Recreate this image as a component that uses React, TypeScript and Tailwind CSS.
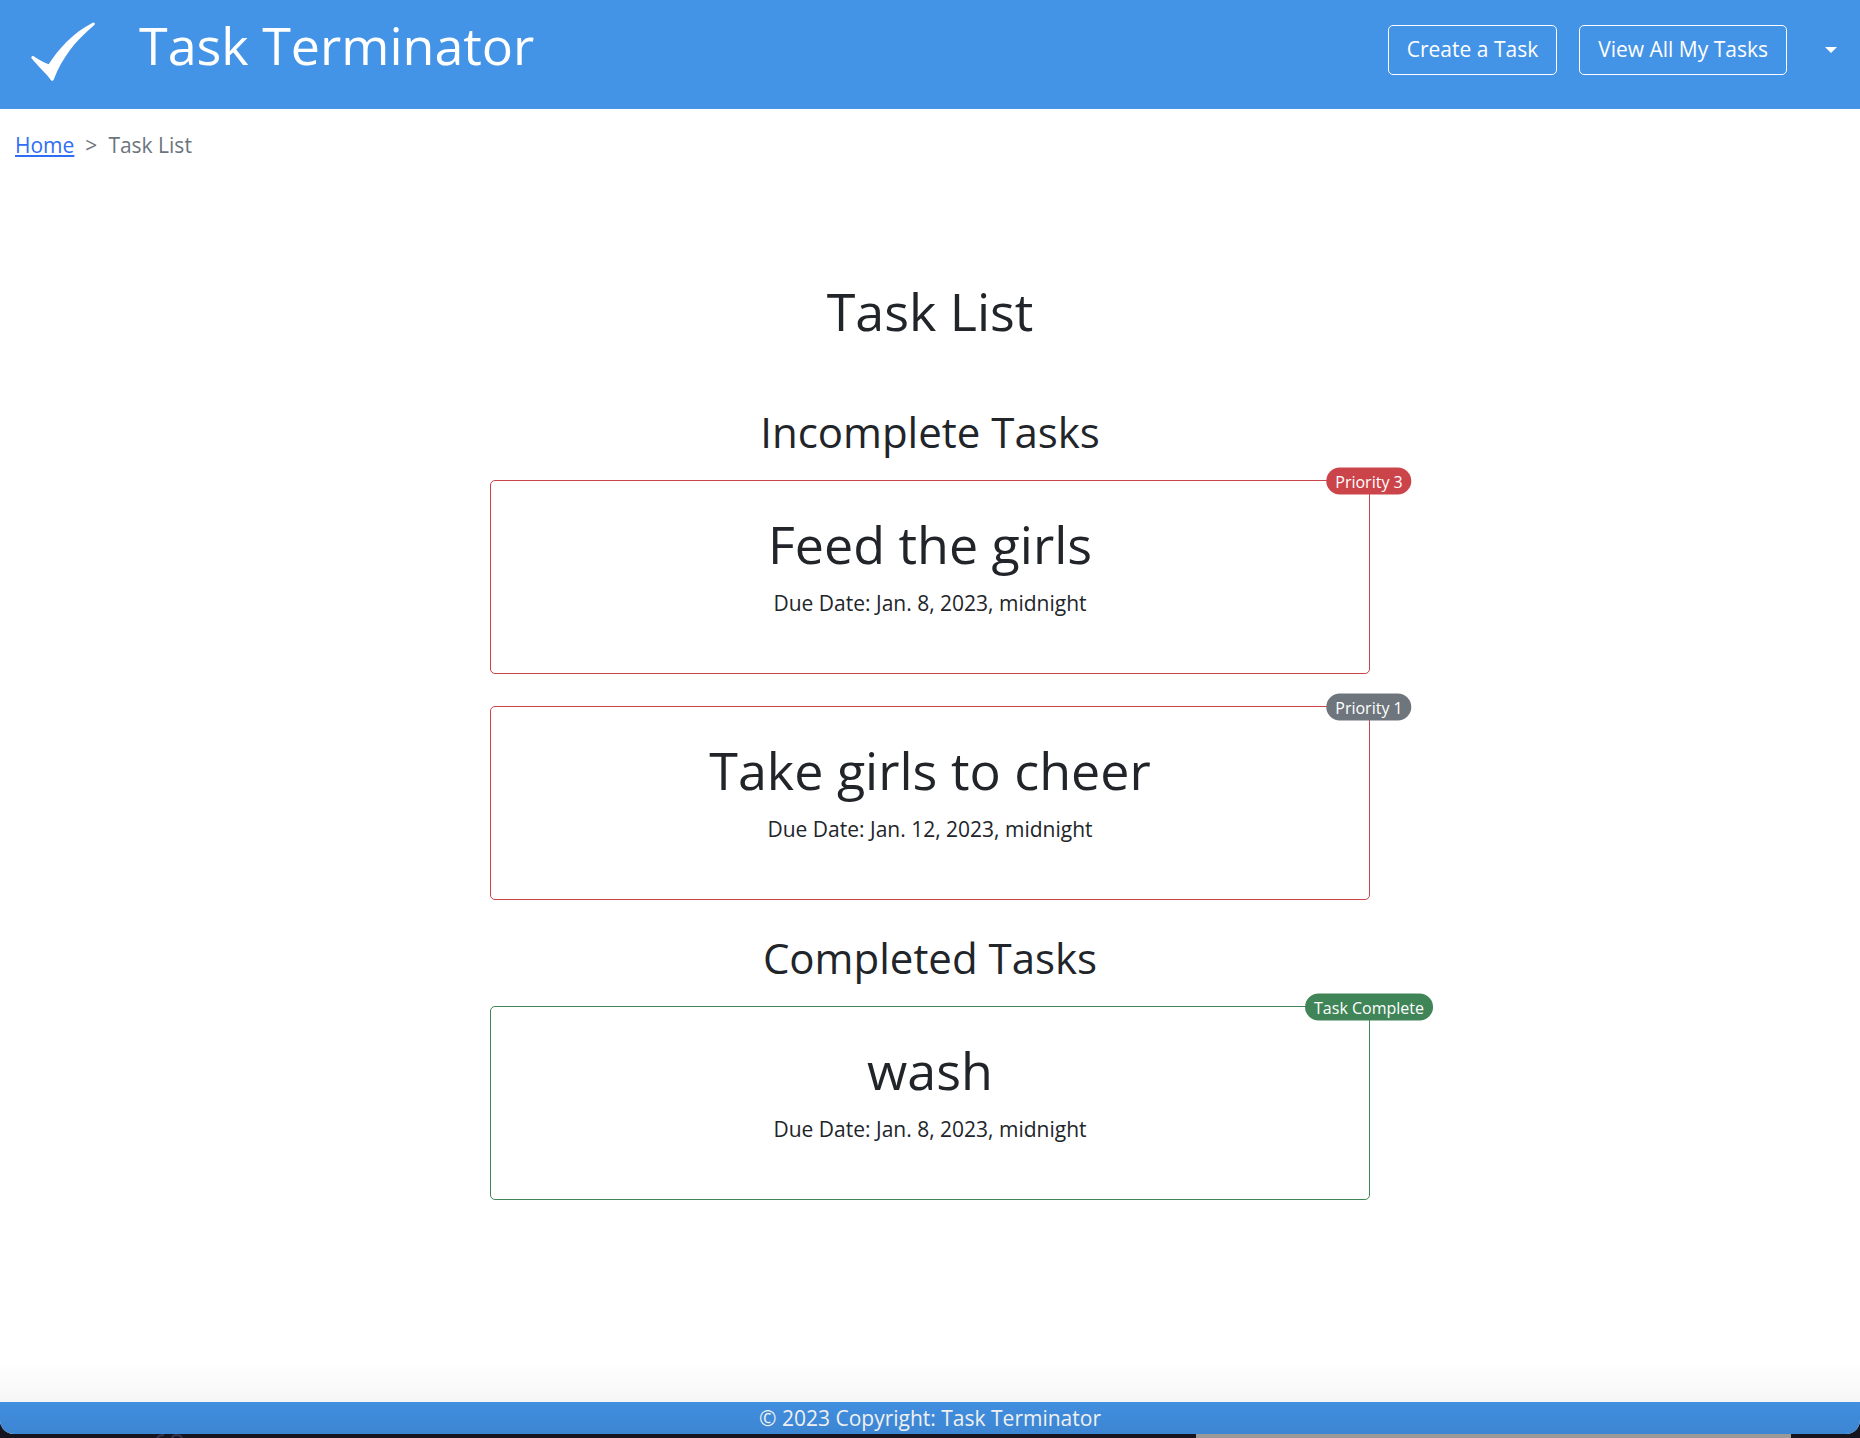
type Task = {
  title: string;
  due: string;
  badge: string;
  badgeClass: string;
  cardClass: string;
};

const incomplete: Task[] = [
  {
    title: "Feed the girls",
    due: "Jan. 8, 2023, midnight",
    badge: "Priority 3",
    badgeClass: "bg-[#cb444a]",
    cardClass: "border-[#cb444a]",
  },
  {
    title: "Take girls to cheer",
    due: "Jan. 12, 2023, midnight",
    badge: "Priority 1",
    badgeClass: "bg-[#6e757c]",
    cardClass: "border-[#cb444a]",
  },
];

const completed: Task[] = [
  {
    title: "wash",
    due: "Jan. 8, 2023, midnight",
    badge: "Task Complete",
    badgeClass: "bg-[#408558]",
    cardClass: "border-[#408558]",
  },
];

function CheckLogo() {
  return (
    <svg viewBox="0 0 192 180" className="h-[60px] w-16" fill="#fff" aria-hidden="true">
      <path d="M1 108 Q0 101 7 102 C22 112 38 121 53 127 C80 84 124 33 185 2 Q189 0 191 3 Q193 6 190 9 C134 56 95 104 68 173 Q64 179 60 175 C45 153 20 132 1 108Z" />
    </svg>
  );
}

function TaskCard({ task }: { task: Task }) {
  return (
    <article className={`relative rounded-[5px] border px-6 pt-8 pb-[53px] text-center ${task.cardClass}`}>
      <h3 className="text-[52px] leading-[62px]">{task.title}</h3>
      <p className="mt-3 leading-[33px]">Due Date: {task.due}</p>
      <span
        className={`absolute top-0 left-full flex h-[27px] -translate-x-1/2 -translate-y-1/2 items-center rounded-full px-[9px] text-base font-medium whitespace-nowrap text-white ${task.badgeClass}`}
      >
        {task.badge}
      </span>
    </article>
  );
}

function TaskSection({ heading, tasks }: { heading: string; tasks: Task[] }) {
  return (
    <section>
      <h2 className="mb-[22px] text-center text-[42px] leading-[52px]">{heading}</h2>
      <div className="flex flex-col gap-8">
        {tasks.map((t) => (
          <TaskCard key={t.title} task={t} />
        ))}
      </div>
    </section>
  );
}

export default function App() {
  return (
    <div className="flex min-h-screen flex-col bg-[#16141f] font-['Open_Sans',sans-serif] text-[21px] text-[#212529]">
      <div className="flex flex-1 flex-col overflow-hidden rounded-b-[14px] bg-white">
        <header className="flex items-start justify-between bg-[#4393e7] pb-[27px] text-white">
          <a href="#home" className="flex items-start gap-11 pl-[31px]">
            <span className="pt-[22px]">
              <CheckLogo />
            </span>
            <span className="pt-[14px] text-[52px] leading-[62px]">Task Terminator</span>
          </a>
          <nav className="flex items-center pt-[25px]">
            <button type="button" className="h-[50px] rounded-[5px] border border-white px-[18px]">
              Create a Task
            </button>
            <button type="button" className="ml-[22px] h-[50px] rounded-[5px] border border-white px-[18px]">
              View All My Tasks
            </button>
            <button type="button" aria-label="Account menu" className="ml-4 flex h-[50px] items-center pr-[23px] pl-[22px]">
              <svg viewBox="0 0 12 6" className="h-[6px] w-3" fill="#fff" aria-hidden="true">
                <path d="M0 0H12L6 6Z" />
              </svg>
            </button>
          </nav>
        </header>

        <nav aria-label="Breadcrumb" className="px-[15px] pt-5">
          <ol className="flex gap-[11px] leading-[33px] text-[#6c757d]">
            <li>
              <a href="#home" className="text-[#2f6ef3] underline decoration-2 underline-offset-2">
                Home
              </a>
            </li>
            <li aria-hidden="true">&gt;</li>
            <li aria-current="page">Task List</li>
          </ol>
        </nav>

        <main className="mx-auto flex w-full max-w-[880px] flex-1 flex-col gap-8 pt-[118px]">
          <h1 className="mb-8 text-center text-[52px] leading-[62px]">Task List</h1>
          <TaskSection heading="Incomplete Tasks" tasks={incomplete} />
          <TaskSection heading="Completed Tasks" tasks={completed} />
        </main>

        <div className="h-10 bg-linear-to-b from-white to-[#f6f6f6]" />
        <footer className="bg-linear-to-b from-[#418fe0] to-[#3c85d2] text-center leading-8 text-[#f0f0f0]">
          © 2023 Copyright: Task Terminator
        </footer>
      </div>
      <div className="flex h-1 items-start">
        <svg viewBox="0 0 28 4" className="ml-[156px] h-1 w-7" fill="none" stroke="#35334d" strokeWidth="2" aria-hidden="true">
          <path d="M1 4Q3 1 8 1M16 4Q17 1 20 1Q25 1 26 4" />
        </svg>
        <div className="mr-[69px] ml-auto h-1 w-[32%] bg-[#9c9a98]" />
      </div>
    </div>
  );
}
